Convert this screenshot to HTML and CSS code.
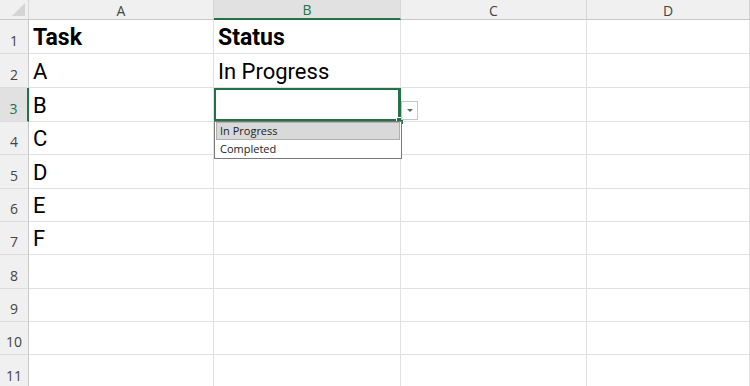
FILE: index.html
```html
<!DOCTYPE html>
<html lang="en">
<head>
    <meta charset="UTF-8">
    <title>Sheet - Data Validation</title>
    <link rel="stylesheet" href="styles.css">
</head>
<body>

    <div class="sheet">
        <!-- Column headers -->
        <div class="corner"><span class="corner-tri"></span></div>
        <div class="col-head">A</div>
        <div class="col-head active">B</div>
        <div class="col-head">C</div>
        <div class="col-head">D</div>

        <!-- Row 1 -->
        <div class="row-head">1</div>
        <div class="cell bold">Task</div>
        <div class="cell bold">Status</div>
        <div class="cell"></div>
        <div class="cell"></div>

        <!-- Row 2 -->
        <div class="row-head">2</div>
        <div class="cell">A</div>
        <div class="cell">In Progress</div>
        <div class="cell"></div>
        <div class="cell"></div>

        <!-- Row 3 (selected cell with dropdown) -->
        <div class="row-head active">3</div>
        <div class="cell">B</div>
        <div class="cell selected">
            <span class="fill-handle"></span>
            <button class="drop-btn"><span class="arrow"></span></button>
            <ul class="drop-list">
                <li class="hover">In Progress</li>
                <li>Completed</li>
            </ul>
        </div>
        <div class="cell"></div>
        <div class="cell"></div>

        <!-- Row 4 -->
        <div class="row-head">4</div>
        <div class="cell">C</div>
        <div class="cell"></div>
        <div class="cell"></div>
        <div class="cell"></div>

        <!-- Row 5 -->
        <div class="row-head">5</div>
        <div class="cell">D</div>
        <div class="cell"></div>
        <div class="cell"></div>
        <div class="cell"></div>

        <!-- Row 6 -->
        <div class="row-head">6</div>
        <div class="cell">E</div>
        <div class="cell"></div>
        <div class="cell"></div>
        <div class="cell"></div>

        <!-- Row 7 -->
        <div class="row-head">7</div>
        <div class="cell">F</div>
        <div class="cell"></div>
        <div class="cell"></div>
        <div class="cell"></div>

        <!-- Empty rows -->
        <div class="row-head">8</div>
        <div class="cell"></div>
        <div class="cell"></div>
        <div class="cell"></div>
        <div class="cell"></div>

        <div class="row-head">9</div>
        <div class="cell"></div>
        <div class="cell"></div>
        <div class="cell"></div>
        <div class="cell"></div>

        <div class="row-head">10</div>
        <div class="cell"></div>
        <div class="cell"></div>
        <div class="cell"></div>
        <div class="cell"></div>

        <div class="row-head">11</div>
        <div class="cell"></div>
        <div class="cell"></div>
        <div class="cell"></div>
        <div class="cell"></div>
    </div>

</body>
</html>
```

FILE: styles.css
```css
body {
    margin: 0;
    background-color: #fff;
    font-family: Roboto, "Liberation Sans", sans-serif;
    color: #000;
    overflow: hidden;
}

/* Spreadsheet grid */
.sheet {
    display: grid;
    grid-template-columns: 29px 185px 187px 186px 1fr;
    grid-template-rows: 20px 34px 34px 34px 33px 34px 33px 33px 34px 33px 33px 34px;
    width: 750px;
    height: 386px;
    overflow: hidden;
}

.corner {
    position: relative;
    background-color: #f0f0f0;
    border-right: 1px solid #d6d6d6;
    border-bottom: 1px solid #c8c8c8;
}

.corner-tri {
    position: absolute;
    right: 3px;
    bottom: 3px;
    width: 0;
    height: 0;
    border-left: 13px solid transparent;
    border-bottom: 13px solid #d4d4d4;
}

.col-head {
    background-color: #f0f0f0;
    border-right: 1px solid #d6d6d6;
    border-bottom: 1px solid #c8c8c8;
    display: flex;
    align-items: center;
    justify-content: center;
    padding-top: 1px;
    font-family: "Open Sans", "Liberation Sans", sans-serif;
    font-size: 14px;
    color: #444;
}

.col-head.active {
    background-color: #e1e1e1;
    color: #217346;
    border-bottom: 2px solid #217346;
}

.row-head {
    background-color: #f0f0f0;
    border-right: 1px solid #c8c8c8;
    border-bottom: 1px solid #dcdcdc;
    display: flex;
    align-items: center;
    justify-content: center;
    padding-top: 7px;
    font-family: "Open Sans", "Liberation Sans", sans-serif;
    font-size: 14px;
    color: #444;
}

.row-head.active {
    background-color: #e1e1e1;
    color: #217346;
    border-right: 2px solid #217346;
}

.cell {
    position: relative;
    border-right: 1px solid #e1e1e1;
    border-bottom: 1px solid #e1e1e1;
    display: flex;
    align-items: flex-end;
    padding: 0 0 2px 4px;
    font-size: 22px;
    line-height: 26px;
    white-space: nowrap;
}

.cell.bold {
    font-weight: bold;
    font-size: 23px;
}

/* Active cell */
.cell.selected {
    box-shadow: inset 0 0 0 2px #217346;
    border-color: #217346;
    z-index: 2;
}

.fill-handle {
    position: absolute;
    right: -4px;
    bottom: -4px;
    width: 6px;
    height: 6px;
    background-color: #217346;
    border: 1px solid #fff;
}

.drop-btn {
    position: absolute;
    left: calc(100% + 1px);
    top: 13px;
    width: 17px;
    height: 19px;
    padding: 0;
    background-color: #fff;
    border: 1px solid #c6c6c6;
    display: flex;
    align-items: center;
    justify-content: center;
}

.arrow {
    width: 0;
    height: 0;
    border-left: 3px solid transparent;
    border-right: 3px solid transparent;
    border-top: 3px solid #666;
}

.drop-list {
    position: absolute;
    left: 0;
    top: 100%;
    width: 186px;
    margin: 0;
    padding: 0;
    list-style: none;
    background-color: #fff;
    border: 1px solid #7a7a7a;
    font-family: "Open Sans", "Liberation Sans", sans-serif;
    font-size: 11px;
    color: #222;
}

.drop-list li {
    height: 18px;
    line-height: 18px;
    padding-left: 5px;
}

.drop-list li.hover {
    background-color: #d9d9d9;
    border: 1px solid #b0b0b0;
    margin: 0 1px;
    padding-left: 3px;
    height: 16px;
    line-height: 16px;
}
```
